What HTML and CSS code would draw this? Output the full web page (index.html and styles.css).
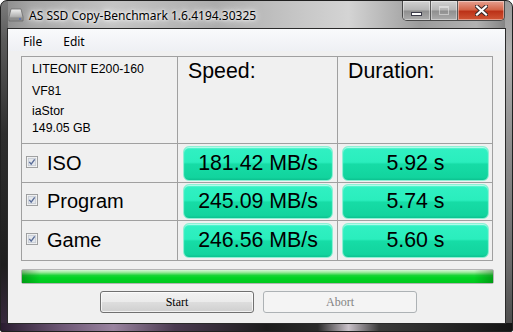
FILE: index.html
```html
<!DOCTYPE html>
<html lang="en">
<head>
    <meta charset="UTF-8">
    <title>AS SSD Copy-Benchmark</title>
    <link rel="stylesheet" href="styles.css">
</head>
<body>
    <div class="window">
        <div class="titlebar">
            <svg class="app-icon" width="16" height="14" viewBox="0 0 16 14">
                <defs>
                    <linearGradient id="hdd" x1="0" y1="0" x2="0" y2="1">
                        <stop offset="0" stop-color="#f2f2f2"/>
                        <stop offset="0.6" stop-color="#b4b4b4"/>
                        <stop offset="1" stop-color="#7a7a7a"/>
                    </linearGradient>
                </defs>
                <path d="M3 1 H13 L15 9 V13 H1 V9 Z" fill="url(#hdd)" stroke="#6a6a6a" stroke-width="0.8"/>
                <rect x="1.5" y="9.5" width="13" height="3" fill="#8c8c8c"/>
                <rect x="11" y="10.5" width="2" height="1" fill="#3a5fd0"/>
            </svg>
            <span class="title">AS SSD Copy-Benchmark 1.6.4194.30325</span>
            <div class="caption-buttons">
                <div class="cap-btn cap-min"><span class="min-glyph"></span></div>
                <div class="cap-btn cap-max"><span class="max-glyph"></span></div>
                <div class="cap-btn cap-close">
                    <svg width="13" height="11" viewBox="0 0 13 11">
                        <path d="M2 1.5 L11 9.5 M11 1.5 L2 9.5" stroke="#3a2a2a" stroke-width="4.2" stroke-linecap="square"/>
                        <path d="M2 1.5 L11 9.5 M11 1.5 L2 9.5" stroke="#ffffff" stroke-width="2.2" stroke-linecap="square"/>
                    </svg>
                </div>
            </div>
        </div>

        <div class="client">
            <div class="menubar">
                <span class="menu-item">File</span>
                <span class="menu-item">Edit</span>
            </div>

            <div class="content">
                <div class="bench-grid">
                    <div class="cell drive-info">
                        <div class="info-line">LITEONIT E200-160</div>
                        <div class="info-line second">VF81</div>
                        <div class="info-line third">iaStor</div>
                        <div class="info-line">149.05 GB</div>
                    </div>
                    <div class="cell head">Speed:</div>
                    <div class="cell head">Duration:</div>

                    <div class="cell test">
                        <svg class="check" width="12" height="12" viewBox="0 0 13 13">
                            <rect x="0.5" y="0.5" width="12" height="12" fill="#f6f6f6" stroke="#9a9b9c"/>
                            <rect x="2.5" y="2.5" width="8" height="8" fill="#e4e7ec" stroke="#c4c9d2"/>
                            <path d="M3.6 6.4 L5.6 8.8 L9.4 3.6" fill="none" stroke="#5a6d98" stroke-width="1.5"/>
                        </svg>
                        <span>ISO</span>
                    </div>
                    <div class="cell speed"><div class="result">181.42 MB/s</div></div>
                    <div class="cell duration"><div class="result">5.92 s</div></div>

                    <div class="cell test">
                        <svg class="check" width="12" height="12" viewBox="0 0 13 13">
                            <rect x="0.5" y="0.5" width="12" height="12" fill="#f6f6f6" stroke="#9a9b9c"/>
                            <rect x="2.5" y="2.5" width="8" height="8" fill="#e4e7ec" stroke="#c4c9d2"/>
                            <path d="M3.6 6.4 L5.6 8.8 L9.4 3.6" fill="none" stroke="#5a6d98" stroke-width="1.5"/>
                        </svg>
                        <span>Program</span>
                    </div>
                    <div class="cell speed"><div class="result">245.09 MB/s</div></div>
                    <div class="cell duration"><div class="result">5.74 s</div></div>

                    <div class="cell test">
                        <svg class="check" width="12" height="12" viewBox="0 0 13 13">
                            <rect x="0.5" y="0.5" width="12" height="12" fill="#f6f6f6" stroke="#9a9b9c"/>
                            <rect x="2.5" y="2.5" width="8" height="8" fill="#e4e7ec" stroke="#c4c9d2"/>
                            <path d="M3.6 6.4 L5.6 8.8 L9.4 3.6" fill="none" stroke="#5a6d98" stroke-width="1.5"/>
                        </svg>
                        <span>Game</span>
                    </div>
                    <div class="cell speed"><div class="result">246.56 MB/s</div></div>
                    <div class="cell duration"><div class="result">5.60 s</div></div>
                </div>

                <div class="progress"><div class="progress-fill"></div></div>

                <div class="buttons">
                    <button class="btn">Start</button>
                    <button class="btn" disabled>Abort</button>
                </div>
            </div>
        </div>
    </div>
</body>
</html>
```

FILE: styles.css
```css
body {
    margin: 0;
    background: #ffffff;
    font-family: "Liberation Sans", Arial, sans-serif;
}
.window {
    width: 513px;
    height: 332px;
    box-sizing: border-box;
    display: flex;
    flex-direction: column;
    border: 1px solid #202020;
    border-radius: 7px 7px 2px 2px;
    overflow: hidden;
    background:
        linear-gradient(to right, #2a1c30 0, #6e5876 12%, #9a84a0 22%, #4a3a50 34%, #1c1c1c 52%, #2a2a2a 62%, #c8c0c8 68%, #3a3a3a 74%, #141414 100%) bottom / 100% 8px no-repeat,
        linear-gradient(to bottom, #7c7c7c 0, #5a5a5a 12%, #2e2e2e 40%, #1e1e1e 80%, #3a2a40 100%) left / 7px 100% no-repeat,
        linear-gradient(to bottom, #9a9a9a 0, #b0b0b0 15%, #8c8c8c 45%, #6a6a6a 80%, #4a4a4a 100%) right / 7px 100% no-repeat,
        linear-gradient(to right, #8a8a8a 0, #a6a6a6 6%, #c4c4c4 22%, #adadad 42%, #c6c6c6 58%, #d4d4d4 68%, #9c9c9c 82%, #b2b2b2 93%, #7a7a7a 100%);
}
.titlebar {
    height: 27px;
    display: flex;
    align-items: flex-start;
    padding: 0 7px 0 7px;
}
.app-icon {
    margin-top: 7px;
    flex-shrink: 0;
}
.title {
    margin-left: 5px;
    margin-top: 6px;
    font-family: "Noto Sans", "Open Sans", sans-serif;
    font-size: 12px;
    color: #000;
    text-shadow: 0 0 6px #ffffff, 0 0 10px #ffffff, 0 0 3px #ffffff;
}
.caption-buttons {
    margin-left: auto;
    display: flex;
    height: 19px;
    border: 1px solid #4a4a4a;
    border-top: none;
    border-radius: 0 0 5px 5px;
    overflow: hidden;
}
.cap-btn {
    display: flex;
    align-items: center;
    justify-content: center;
    height: 100%;
    background: linear-gradient(to bottom, #d2d2d2 0%, #b4b4b4 48%, #8e8e8e 52%, #acacac 100%);
    box-shadow: inset 0 0 0 1px rgba(255, 255, 255, 0.4);
}
.cap-min {
    width: 27px;
    border-right: 1px solid #5a5a5a;
}
.cap-max {
    width: 26px;
    border-right: 1px solid #5a5a5a;
}
.cap-close {
    width: 46px;
    background: linear-gradient(to bottom, #e6a090 0%, #d4664a 45%, #bc3218 55%, #d05636 100%);
}
.min-glyph {
    width: 9px;
    height: 2px;
    margin-top: 6px;
    background: #ffffff;
    border: 1px solid #3a3a48;
}
.max-glyph {
    width: 8px;
    height: 6px;
    border: 1px solid rgba(255, 255, 255, 0.55);
    border-top-width: 2px;
    opacity: 0.8;
}
.client {
    flex: 1;
    margin: 0 6px 7px 6px;
    border: 1px solid #2a2a2a;
    background: #f0f0f0;
    display: flex;
    flex-direction: column;
}
.menubar {
    height: 22px;
    box-sizing: border-box;
    padding: 3px 0 0 15px;
    display: flex;
    align-items: center;
    gap: 21px;
    background: linear-gradient(to bottom, #f9fafc 0%, #eef0f4 100%);
    font-family: "Noto Sans", "Open Sans", sans-serif;
    font-size: 12px;
    color: #000;
}
.content {
    padding: 5px 0 0 13px;
}
.bench-grid {
    display: grid;
    grid-template-columns: 155px 159px 154px;
    grid-template-rows: 86px 38px 37px 39px;
    gap: 1px;
    padding: 1px;
    width: fit-content;
    background: #a0a0a0;
}
.cell {
    background: #f0f0f0;
}
.drive-info {
    padding: 4px 0 0 10px;
    font-size: 12.3px;
    line-height: 17px;
    color: #000;
}
.info-line.second {
    margin-top: 5px;
}
.info-line.third {
    margin-top: 3px;
}
.head {
    padding: 2px 0 0 10px;
    font-size: 21.33px;
    color: #000;
}
.test {
    display: flex;
    align-items: center;
    padding-left: 4px;
    font-size: 20px;
    color: #000;
}
.check {
    margin-right: 9px;
    margin-top: -3px;
}
.speed, .duration {
    display: flex;
    align-items: center;
}
.speed {
    padding: 0 4px 0 5px;
}
.duration {
    padding: 0 3px 0 4px;
}
.result {
    flex: 1;
    height: 35px;
    box-sizing: border-box;
    display: flex;
    align-items: center;
    justify-content: center;
    border: 1px solid #8ef0d4;
    border-radius: 6px;
    background: linear-gradient(to bottom, #5ef8d4 0%, #30f0c2 8%, #2aeebd 46%, #16dca6 52%, #12d49e 92%, #0cc290 100%);
    box-shadow: inset 0 1px 1px rgba(255, 255, 255, 0.6);
    font-size: 21.33px;
    color: #000;
}
.progress {
    width: 471px;
    height: 13px;
    margin-top: 8px;
    border: 1px solid #b4b4b4;
    border-radius: 2px;
    background: #e6e6e6;
}
.progress-fill {
    height: 100%;
    background:
        linear-gradient(to right, rgba(0, 70, 0, 0.35) 0, rgba(0, 70, 0, 0) 4%, rgba(0, 70, 0, 0) 96%, rgba(0, 70, 0, 0.35) 100%),
        linear-gradient(to bottom, #d6f6d6 0%, #9cea9c 18%, #1ad436 42%, #00d422 60%, #00c81e 100%);
}
.buttons {
    display: flex;
    gap: 9px;
    margin: 7px 0 0 79px;
}
.btn {
    width: 154px;
    height: 22px;
    padding: 0;
    border: 1px solid #707070;
    border-radius: 3px;
    background: linear-gradient(to bottom, #f2f2f2 0%, #ebebeb 48%, #dddddd 52%, #cfcfcf 100%);
    box-shadow: inset 0 0 0 1px rgba(255, 255, 255, 0.7);
    font-family: "Liberation Serif", "Times New Roman", serif;
    font-size: 12px;
    color: #000;
}
.btn:disabled {
    border-color: #adb2b5;
    background: #f4f4f4;
    box-shadow: none;
    color: #838383;
}
```
